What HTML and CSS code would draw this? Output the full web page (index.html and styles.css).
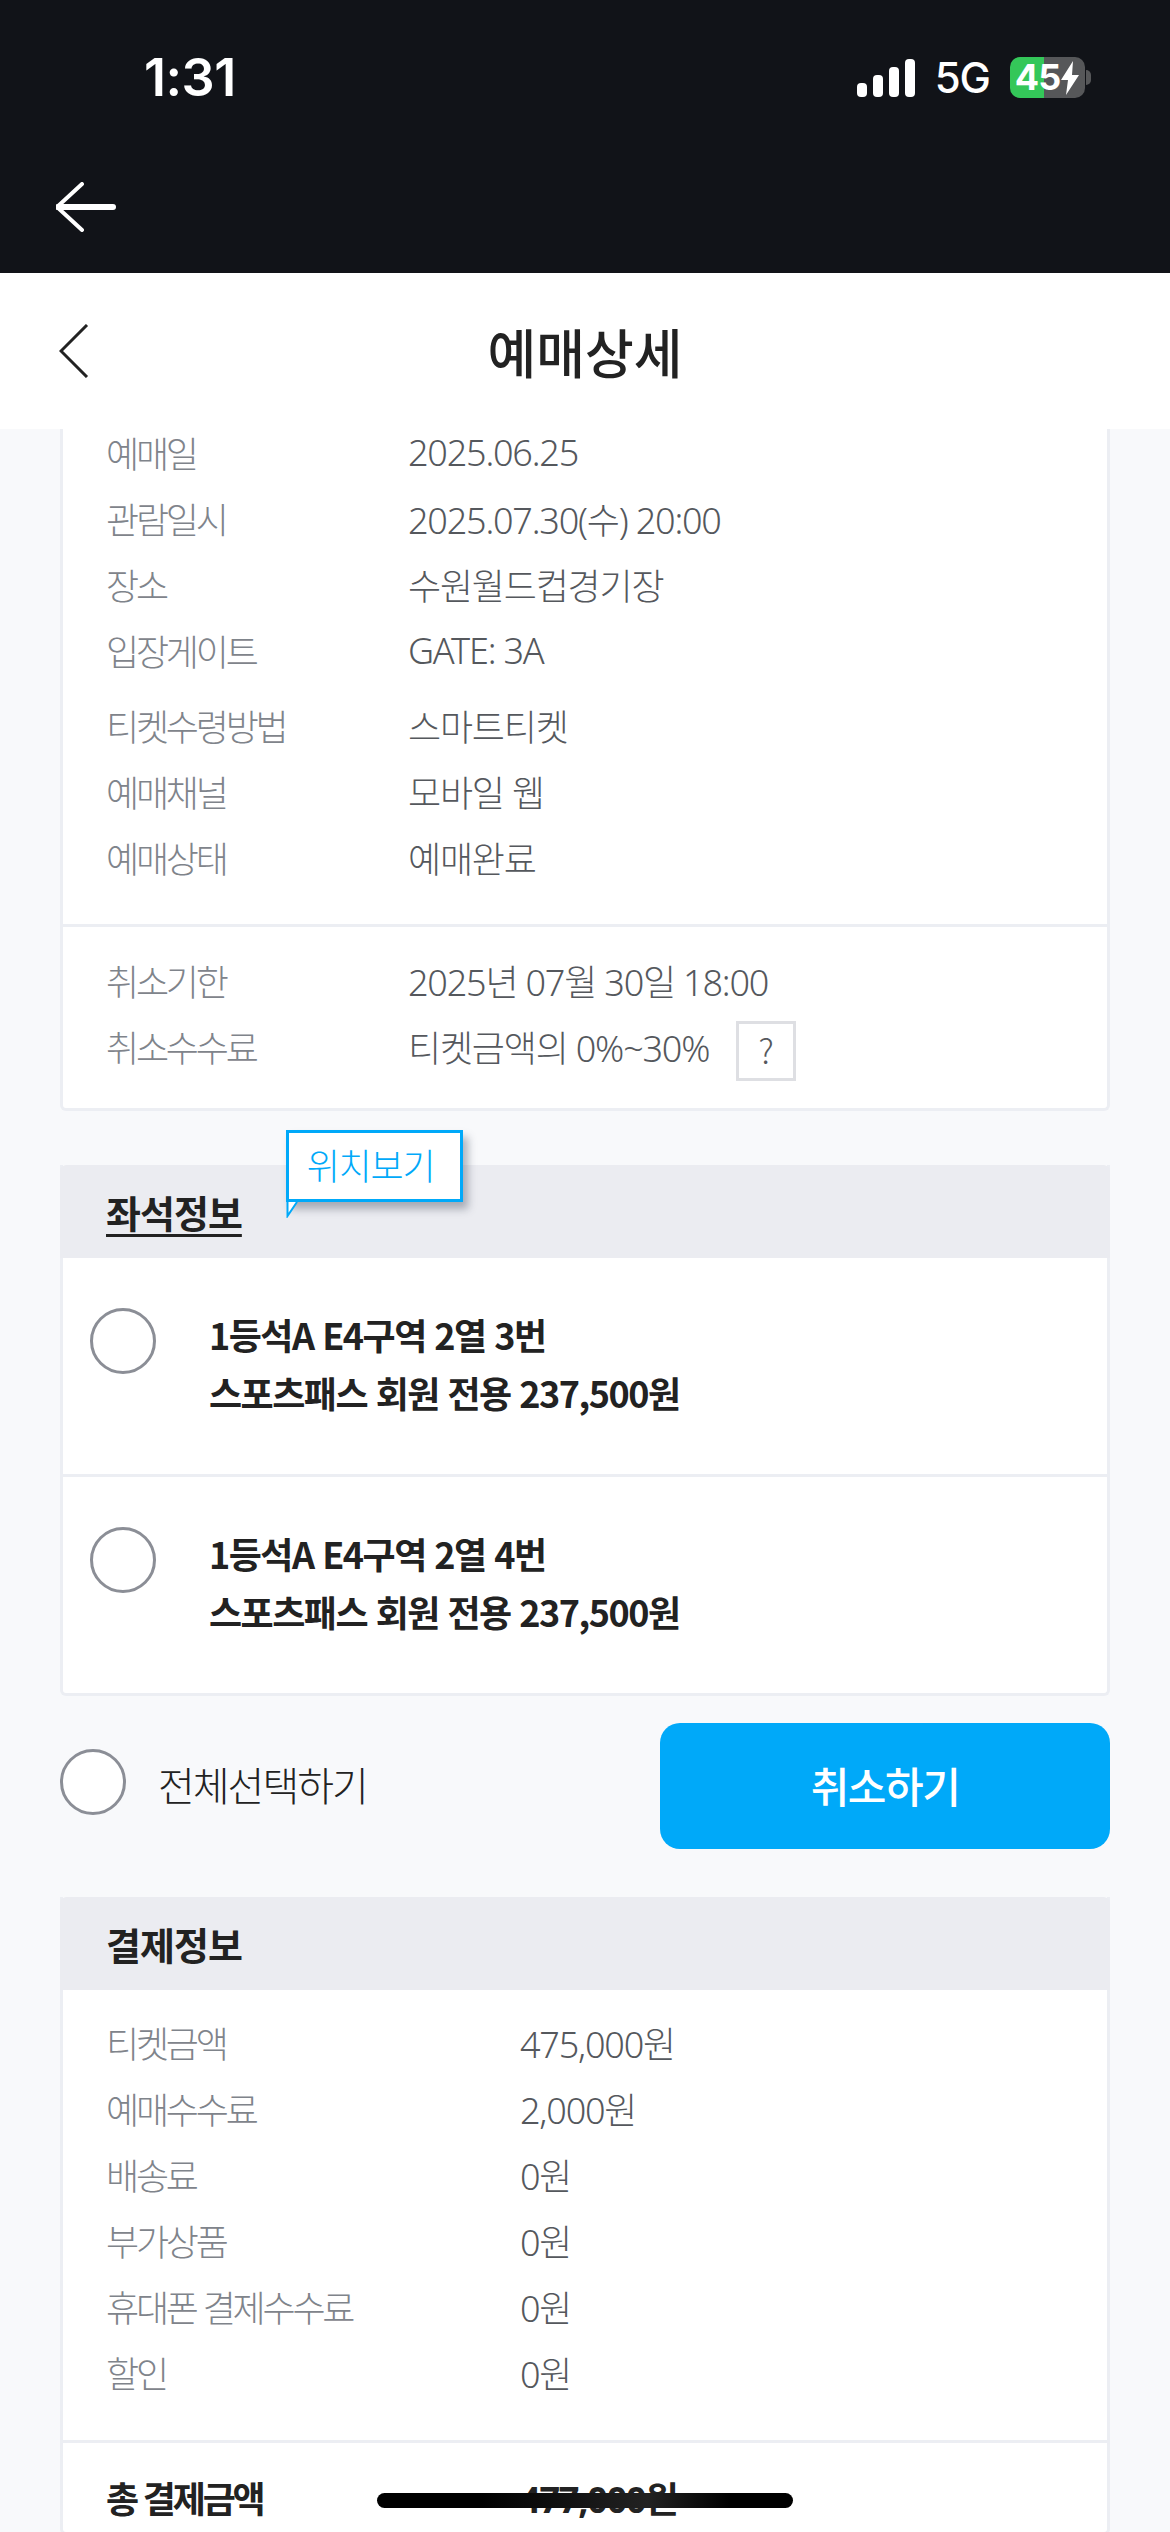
FILE: index.html
```html
<!DOCTYPE html>
<html lang="ko">
<head>
<meta charset="utf-8">
<title>예매상세</title>
<link rel="stylesheet" href="styles.css">
</head>
<body>
<div class="page">
  <div class="topbar">
    <div class="status">
      <span class="time">1:31</span>
      <div class="status-right">
        <svg class="signal" width="58" height="38" viewBox="0 0 58 38"><rect x="0" y="24" width="10" height="14" rx="4"/><rect x="16" y="16" width="10" height="22" rx="4"/><rect x="32" y="8" width="10" height="30" rx="4"/><rect x="48" y="0" width="10" height="38" rx="4"/></svg>
        <span class="net">5G</span>
        <span class="battery"><span>45</span><svg width="20" height="34" viewBox="0 0 20 34"><path d="M13 0 1 19h7l-2 15L19 14h-7z" fill="#fff"/></svg></span>
      </div>
    </div>
    <svg class="back-white" width="62" height="50" viewBox="0 0 62 50"><path d="M26 2 1 25l25 23" fill="none" stroke="#fff" stroke-width="4" stroke-linecap="round" stroke-linejoin="round"/><path d="M2 25h55" fill="none" stroke="#fff" stroke-width="6" stroke-linecap="round"/></svg>
  </div>

  <header class="header">
    <svg class="chev" width="30" height="54" viewBox="0 0 30 54"><path d="M28 1 2 27l26 26" fill="none" stroke="#222" stroke-width="3"/></svg>
    <h1 class="title">예매상세</h1>
  </header>

  <main class="main">
    <section class="card card-first">
      <div class="block block-a">
        <div class="row"><span class="lab">예매일</span><span class="val">2025.06.25</span></div>
        <div class="row"><span class="lab">관람일시</span><span class="val">2025.07.30(수) 20:00</span></div>
        <div class="row"><span class="lab">장소</span><span class="val">수원월드컵경기장</span></div>
        <div class="row row-gap"><span class="lab">입장게이트</span><span class="val">GATE: 3A</span></div>
        <div class="row"><span class="lab">티켓수령방법</span><span class="val">스마트티켓</span></div>
        <div class="row"><span class="lab">예매채널</span><span class="val">모바일 웹</span></div>
        <div class="row"><span class="lab">예매상태</span><span class="val">예매완료</span></div>
      </div>
      <div class="block block-b">
        <div class="row"><span class="lab">취소기한</span><span class="val">2025년 07월 30일 18:00</span></div>
        <div class="row"><span class="lab">취소수수료</span><span class="val">티켓금액의 0%~30%</span><span class="help">?</span></div>
      </div>
    </section>

    <section class="card seat-card">
      <div class="card-head">
        <span class="head-text underlined">좌석정보</span>
        <div class="tip">위치보기
          <svg class="tip-tail" width="14" height="16" viewBox="0 0 14 16"><path d="M1.500 0V14L11 0" fill="#fff" stroke="#00a9f9" stroke-width="2"/></svg>
        </div>
      </div>
      <div class="seat">
        <span class="radio"></span>
        <div class="seat-text"><div>1등석A E4구역 2열 3번</div><div>스포츠패스 회원 전용 237,500원</div></div>
      </div>
      <div class="seat seat-line">
        <span class="radio"></span>
        <div class="seat-text"><div>1등석A E4구역 2열 4번</div><div>스포츠패스 회원 전용 237,500원</div></div>
      </div>
    </section>

    <div class="select-bar">
      <div class="select-all"><span class="radio radio-all"></span><span class="select-label">전체선택하기</span></div>
      <button class="cancel" type="button">취소하기</button>
    </div>

    <section class="card pay-card">
      <div class="card-head"><span class="head-text">결제정보</span></div>
      <div class="block block-c">
        <div class="row pay"><span class="lab">티켓금액</span><span class="val">475,000원</span></div>
        <div class="row pay"><span class="lab">예매수수료</span><span class="val">2,000원</span></div>
        <div class="row pay"><span class="lab">배송료</span><span class="val">0원</span></div>
        <div class="row pay"><span class="lab">부가상품</span><span class="val">0원</span></div>
        <div class="row pay"><span class="lab">휴대폰 결제수수료</span><span class="val">0원</span></div>
        <div class="row pay"><span class="lab">할인</span><span class="val">0원</span></div>
      </div>
      <div class="block block-d">
        <div class="row pay total"><span class="lab">총 결제금액</span><span class="val">477,000원</span></div>
      </div>
    </section>
  </main>
  <div class="home-indicator"></div>
</div>
</body>
</html>
```

FILE: styles.css
```css
* { box-sizing: border-box; }
html, body { margin: 0; padding: 0; }
body { font-family: "Noto Sans CJK KR", "Noto Sans", sans-serif; background: #f8f9fb; }
.page { position: relative; width: 1170px; height: 2532px; overflow: hidden; background: #f8f9fb; }

.topbar { height: 273px; background: #111318; padding: 57px 85px 0 56px; }
.status { display: flex; justify-content: space-between; align-items: center; height: 41px; }
.time { margin-left: 88px; font: 600 52px/41px Inter, sans-serif; color: #fff; letter-spacing: -0.5px; }
.status-right { display: flex; align-items: center; }
.signal { fill: #fff; }
.net { margin-left: 20px; font: 500 42px/41px Inter, sans-serif; color: #fff; letter-spacing: -1px; }
.battery { position: relative; display: flex; align-items: center; justify-content: center; margin-left: 20px; width: 75px; height: 41px; border-radius: 10px; background: linear-gradient(90deg, #34c759 46%, #565759 46%); color: #fff; font: 700 36px/41px Inter, sans-serif; letter-spacing: -1px; }
.battery::after { content: ""; position: absolute; right: -6px; top: 13px; width: 5px; height: 15px; border-radius: 0 5px 5px 0; background: #565759; }
.back-white { display: block; margin-top: 84px; }

.header { position: relative; z-index: 1; height: 156px; background: #fff; display: flex; align-items: center; justify-content: center; }
.chev { position: absolute; left: 59px; top: 51px; }
.title { margin: 0; font-size: 53px; line-height: 60px; font-weight: 500; color: #222; letter-spacing: 0; }

.main { margin-top: -8px; padding: 0 60px; }
.card { position: relative; background: #fff; border: 3px solid #eceef3; border-top: 0; border-radius: 0 0 6px 6px; }
.block { padding-left: 43px; }
.block-a { padding-bottom: 32px; border-bottom: 3px solid #eceef3; }
.block-b { padding-top: 22px; padding-bottom: 27px; }
.block-c { padding-top: 21px; padding-bottom: 33px; border-bottom: 3px solid #eceef3; }
.block-d { padding-top: 23px; }

.row { display: flex; align-items: center; height: 66px; padding-bottom: 4px; font-size: 36px; font-weight: 300; }
.row-gap { margin-bottom: 9px; }
.lab { width: 302px; color: #7f848b; flex: none; letter-spacing: -3.2px; }
.val { font-family: "Noto Sans", "Noto Sans CJK KR", sans-serif; color: #55585d; letter-spacing: -1.2px; }
.pay .lab { width: 414px; }
.help { display: flex; align-items: center; justify-content: center; align-self: flex-end; margin: 0 0 -4px 27px; width: 60px; height: 60px; padding-bottom: 4px; border: 3px solid #dedfe3; color: #55585d; font-size: 34px; }
.total { font-weight: 700; }
.total .lab, .total .val { color: #222; }

.seat-card { margin-top: 54px; }
.pay-card { margin-top: 48px; }
.card-head { position: relative; height: 93px; margin: 0 -3px; padding: 0 0 0 46px; background: #ebecf1; border-radius: 6px 6px 0 0; display: flex; align-items: center; }
.head-text { font-size: 38px; font-weight: 700; letter-spacing: -1px; color: #222; }
.underlined { text-decoration: underline; text-decoration-thickness: 3px; text-underline-offset: 6px; }
.tip { position: absolute; left: 226px; top: -35px; width: 177px; height: 72px; padding: 0 8px 5px 0; display: flex; align-items: center; justify-content: center; background: #fff; border: 3px solid #00a9f9; box-shadow: 5px 7px 8px rgba(40, 50, 70, .35); color: #00a9f9; font-size: 36px; font-weight: 300; letter-spacing: -1.2px; }
.tip-tail { position: absolute; left: -3px; top: 69px; }

.seat { display: flex; align-items: flex-start; gap: 53px; height: 216px; padding: 50px 0 0 27px; }
.seat-line { height: 219px; border-top: 3px solid #eceef3; }
.radio { display: block; flex: none; width: 66px; height: 66px; border: 3px solid #8b8e96; border-radius: 50%; background: #fff; }
.seat-text { margin-top: -3px; font-size: 36px; line-height: 58px; font-weight: 700; letter-spacing: -1.500px; color: #222; }

.select-bar { display: flex; align-items: center; justify-content: space-between; margin-top: 27px; height: 126px; }
.select-all { display: flex; align-items: center; gap: 32px; }
.radio-all { margin-bottom: 8px; }
.select-label { margin-bottom: 5px; font-size: 40px; letter-spacing: -2px; color: #222; font-weight: 300; }
.cancel { width: 450px; height: 126px; padding: 0 0 3px; border: 0; border-radius: 20px; background: #00a9f9; color: #fff; font-family: inherit; font-size: 42px; font-weight: 500; letter-spacing: -1.5px; }

.home-indicator { position: absolute; left: 377px; top: 2493px; width: 416px; height: 15px; border-radius: 8px; background: linear-gradient(90deg, #000 25%, #222 65%, #000 85%); }
```
